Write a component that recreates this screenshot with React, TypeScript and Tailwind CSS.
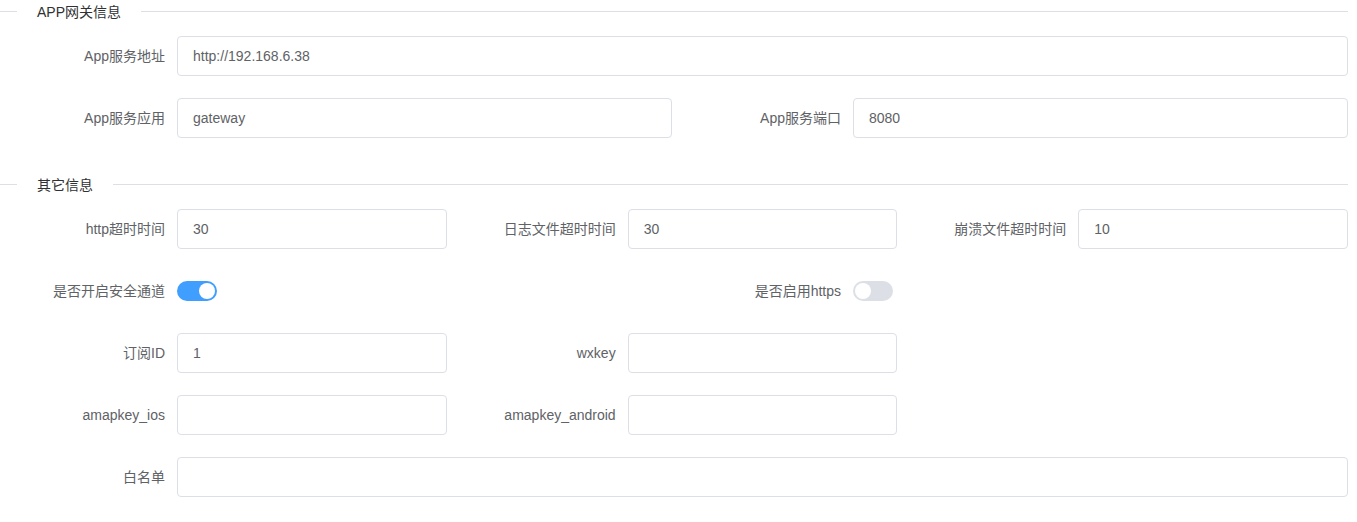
import React from "react"

const font = { fontFamily: '"Liberation Sans", "Noto Sans CJK SC", sans-serif' }

function Divider({ title, className = "" }: { title: string; className?: string }) {
  return (
    <div className={`relative h-px w-full bg-[#dcdfe6] ${className}`}>
      <div className="absolute left-[17px] top-1/2 -translate-y-1/2 bg-white px-5 text-[14px] font-normal text-[#303133]">
        {title}
      </div>
    </div>
  )
}

function Field({ label, value = "" }: { label: string; value?: string }) {
  return (
    <div className="flex h-10">
      <label className="w-[177px] shrink-0 pr-3 text-right text-[14px] leading-10 text-[#606266]">{label}</label>
      <input
        readOnly
        value={value}
        className="h-10 min-w-0 flex-1 rounded border border-[#dcdfe6] bg-white px-[15px] text-[14px] text-[#606266] outline-none"
        style={font}
      />
    </div>
  )
}

function SwitchField({ label, on }: { label: string; on: boolean }) {
  return (
    <div className="flex h-10 items-center">
      <label className="w-[177px] shrink-0 pr-3 text-right text-[14px] leading-10 text-[#606266]">{label}</label>
      <span
        className={`relative inline-block h-5 w-10 rounded-full ${on ? "bg-[#409eff]" : "bg-[#dcdfe6]"}`}
      >
        <span className={`absolute top-[2px] h-4 w-4 rounded-full bg-white ${on ? "left-[22px]" : "left-[2px]"}`} />
      </span>
    </div>
  )
}

export default function App() {
  return (
    <div className="w-[1348px] bg-white pt-[11px]" style={font}>
      <Divider title="APP网关信息" />
      <div className="mt-6 flex flex-col gap-[22px]">
        <Field label="App服务地址" value="http://192.168.6.38" />
        <div className="grid grid-cols-2 gap-x-1">
          <Field label="App服务应用" value="gateway" />
          <Field label="App服务端口" value="8080" />
        </div>
      </div>
      <Divider title="其它信息" className="mt-[46px] mb-6" />
      <div className="flex flex-col gap-[22px] pb-6">
        <div className="grid grid-cols-3 gap-x-1">
          <Field label="http超时时间" value="30" />
          <Field label="日志文件超时时间" value="30" />
          <Field label="崩溃文件超时时间" value="10" />
        </div>
        <div className="grid grid-cols-2 gap-x-1">
          <SwitchField label="是否开启安全通道" on />
          <SwitchField label="是否启用https" on={false} />
        </div>
        <div className="grid grid-cols-3 gap-x-1">
          <Field label="订阅ID" value="1" />
          <Field label="wxkey" />
        </div>
        <div className="grid grid-cols-3 gap-x-1">
          <Field label="amapkey_ios" />
          <Field label="amapkey_android" />
        </div>
        <Field label="白名单" />
      </div>
    </div>
  )
}
